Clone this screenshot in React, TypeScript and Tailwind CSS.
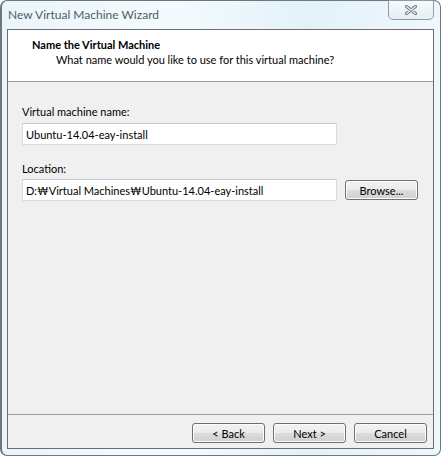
import React from "react";

const FONT = "font-['Lato','Noto_Sans_CJK_KR',sans-serif]";

const BTN =
  "h-[20px] w-[73px] rounded-[3px] border border-[#707070] bg-[linear-gradient(#f2f2f2_0%,#ebebeb_50%,#dddddd_50%,#cfcfcf_100%)] text-[11px] leading-none text-black shadow-[inset_0_0_0_1px_#fcfcfc] flex items-center justify-center";

const INPUT =
  "h-[22px] w-[315px] border border-[#d9dbde] border-t-[#c3c6cc] bg-white px-[3px] text-[11px] leading-none text-black flex items-center";

function CloseButton() {
  return (
    <div className="mt-[-1px] h-[20px] w-[46px] rounded-b-[5px] border border-[#8f9ca5] bg-[linear-gradient(#f6fbfd,#e6eef2)] flex items-center justify-center">
      {/* X glyph */}
      <svg width="12" height="10" viewBox="0 0 12 10">
        <path
          d="M1.5 1.5 L10.5 8.5 M10.5 1.5 L1.5 8.5"
          stroke="#6a7078"
          strokeWidth="3"
          strokeLinecap="round"
        />
        <path
          d="M1.5 1.5 L10.5 8.5 M10.5 1.5 L1.5 8.5"
          stroke="#f4f6f8"
          strokeWidth="1.2"
          strokeLinecap="round"
        />
      </svg>
    </div>
  );
}

export default function App() {
  return (
    <div className={`w-[442px] h-[457px] bg-white ${FONT}`}>
      <div className="h-[456px] w-[441px] border border-[#6b7880] border-l-2 rounded-[7px] bg-[linear-gradient(90deg,#eaf5fa_0%,#f4fbfe_40%,#e3f1f9_70%,#eef8fc_100%)] flex flex-col pl-[5px] pr-[6px] pb-[6px]">
        {/* Title bar */}
        <div className="h-[28px] flex items-start justify-between">
          <span className="pt-[6px] pl-[1px] text-[12px] leading-[16px] text-[#555b61]">
            New Virtual Machine Wizard
          </span>
          <CloseButton />
        </div>

        {/* Client */}
        <div className="flex-1 border border-[#6e6e6e] bg-[#f0f0f0] flex flex-col">
          {/* Header */}
          <div className="h-[52px] bg-white border-b border-[#a0a0a0] pl-[24px] pt-[7px]">
            <p className="text-[11px] leading-[15px] font-bold text-black">
              Name the Virtual Machine
            </p>
            <p className="pl-[24px] text-[11px] leading-[15px] text-black">
              What name would you like to use for this virtual machine?
            </p>
          </div>

          {/* Body */}
          <div className="flex-1 pl-[14px] pt-[22px]">
            <p className="text-[11px] leading-[15px] text-black">
              Virtual machine name:
            </p>
            <div className={`mt-[4px] ${INPUT}`}>Ubuntu-14.04-eay-install</div>

            <p className="mt-[16px] text-[11px] leading-[15px] text-black">
              Location:
            </p>
            <div className="mt-[3px] flex items-center gap-[8px]">
              <div className={INPUT}>D:₩Virtual Machines₩Ubuntu-14.04-eay-install</div>
              <button className={BTN}>Browse...</button>
            </div>
          </div>

          {/* Footer */}
          <div className="h-[34px] border-t border-[#a0a0a0] flex justify-end gap-[8px] pr-[6px] pt-[8px]">
            <button className={BTN}>&lt; Back</button>
            <button className={BTN}>Next &gt;</button>
            <button className={BTN}>Cancel</button>
          </div>
        </div>
      </div>
    </div>
  );
}
